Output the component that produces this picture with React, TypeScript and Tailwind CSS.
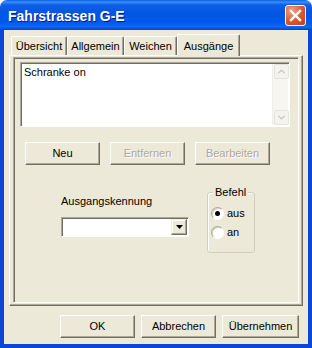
import { ChevronUp, ChevronDown } from "lucide-react";

const tabs = [
  { label: "Übersicht", w: "w-[56px]" },
  { label: "Allgemein", w: "w-[57px]" },
  { label: "Weichen", w: "w-[53px]" },
];

function Btn({ label, className, disabled }: { label: string; className: string; disabled?: boolean }) {
  return (
    <div
      className={
        "h-[23px] flex items-center justify-center bg-[#ece9d8] border-t border-l border-t-white border-l-white border-r border-b border-r-[#716f64] border-b-[#716f64] shadow-[inset_-1px_-1px_0_#aca899] text-[11px] leading-[13px] " +
        (disabled ? "text-[#aca899] [text-shadow:1px_1px_0_#ffffff]" : "text-black") +
        " " +
        className
      }
    >
      {label}
    </div>
  );
}

function Radio({ label, checked }: { label: string; checked?: boolean }) {
  return (
    <div className="flex items-center h-[13px] gap-[3px]">
      <div className="w-[13px] h-[13px] rounded-full bg-white border border-t-[#aca899] border-l-[#aca899] border-r-white border-b-white shadow-[inset_1px_1px_0_#d6d3c4] flex items-center justify-center">
        {checked && <div className="w-[5px] h-[5px] rounded-full bg-black" />}
      </div>
      <span className="text-[11px] leading-[13px]">{label}</span>
    </div>
  );
}

export default function App() {
  return (
    <div className="w-[312px] h-[348px] flex flex-col font-['Liberation_Sans',Arial,sans-serif] select-none">
      {/* title bar */}
      <div className="h-[30px] rounded-t-[7px] flex items-start justify-between pl-[8px] pr-[6px] pt-[5px] bg-[linear-gradient(to_bottom,#0a5fe6_0%,#3d8ff8_7%,#0e5fe8_16%,#0355e2_45%,#0059ea_75%,#0b69f4_90%,#0043c4_100%)]">
        <span className="text-white font-bold text-[14px] leading-[18px] mt-[2px] [text-shadow:1px_1px_0_#0a1a80]">
          Fahrstrassen G-E
        </span>
        <div className="w-[21px] h-[21px] rounded-[3px] border border-white bg-[radial-gradient(circle_at_30%_25%,#f1a083,#d9572f_55%,#c13c16)] flex items-center justify-center">
          <svg width="13" height="13" viewBox="0 0 13 13">
            <line x1="2" y1="2" x2="11" y2="11" stroke="white" strokeWidth="2.4" strokeLinecap="square" />
            <line x1="11" y1="2" x2="2" y2="11" stroke="white" strokeWidth="2.4" strokeLinecap="square" />
          </svg>
        </div>
      </div>

      {/* client area */}
      <div className="flex-1 flex flex-col bg-[#ece9d8] border-x-4 border-b-4 border-[#0a47d6] px-[5px] pt-[4px]">
        {/* tabs */}
        <div className="h-[21px] flex items-end pl-[2px] text-[11px] relative z-10">
          {tabs.map((t) => (
            <div
              key={t.label}
              className={
                "h-[19px] flex items-center justify-center border-t border-l border-t-white border-l-white border-r border-r-[#716f64] shadow-[inset_-1px_0_0_#aca899] rounded-t-[2px] " +
                t.w
              }
            >
              {t.label}
            </div>
          ))}
          <div className="w-[63px] h-[22px] -mb-[1px] bg-[#ece9d8] flex items-start justify-center pt-[3px] border-t border-l border-t-white border-l-white border-r border-r-[#716f64] shadow-[inset_-1px_0_0_#aca899] rounded-t-[2px]">
            Ausgänge
          </div>
        </div>

        {/* panel */}
        <div className="h-[251px] flex flex-col border-t border-l border-t-white border-l-white border-r border-b border-r-[#716f64] border-b-[#716f64] shadow-[inset_-1px_-1px_0_#aca899] pl-[3px] pt-[1px] pr-[3px] pb-[2px]">
          <div className="flex-1 flex flex-col border-t border-l border-t-[#aca899] border-l-[#aca899] border-r border-b border-r-white border-b-white shadow-[inset_1px_1px_0_#716f64]">
            {/* list box */}
            <div className="ml-[6px] mt-[4px] w-[270px] h-[65px] flex bg-white border-t border-l border-t-[#aca899] border-l-[#aca899] border-r border-b border-r-white border-b-white shadow-[inset_1px_1px_0_#716f64] pl-[3px] pt-[3px] pr-[1px] pb-[1px]">
              <div className="flex-1 text-[11px] leading-[13px]">Schranke on</div>
              <div className="w-[16px] flex flex-col justify-between bg-[#f7f6f1] border-l border-l-[#f0efe8] mt-[-2px]">
                <div className="w-[15px] h-[15px] ml-[1px] rounded-[2px] border border-[#e6e4da] bg-[#f4f3ee] flex items-center justify-center">
                  <ChevronUp size={11} strokeWidth={3} color="#c9c7ba" />
                </div>
                <div className="w-[15px] h-[15px] ml-[1px] rounded-[2px] border border-[#e6e4da] bg-[#f4f3ee] flex items-center justify-center">
                  <ChevronDown size={11} strokeWidth={3} color="#c9c7ba" />
                </div>
              </div>
            </div>

            {/* action buttons */}
            <div className="mt-[15px] ml-[11px] flex gap-[10px]">
              <Btn label="Neu" className="w-[75px]" />
              <Btn label="Entfernen" className="w-[75px]" disabled />
              <Btn label="Bearbeiten" className="w-[75px]" disabled />
            </div>

            {/* lower row */}
            <div className="mt-[27px] flex items-start">
              <div className="ml-[47px] w-[128px] flex flex-col pt-[3px]">
                <span className="text-[11px] leading-[13px]">Ausgangskennung</span>
                <div className="mt-[9px] h-[20px] flex justify-end bg-white border-t border-l border-t-[#aca899] border-l-[#aca899] border-r border-b border-r-white border-b-white shadow-[inset_1px_1px_0_#716f64] pt-[1px] pr-[1px] pl-[1px] pb-[1px]">
                  <div className="w-[16px] h-[16px] bg-[#ece9d8] border-t border-l border-t-[#f1efe2] border-l-[#f1efe2] border-r border-b border-r-[#716f64] border-b-[#716f64] shadow-[inset_-1px_-1px_0_#aca899,inset_1px_1px_0_#ffffff] flex items-center justify-center">
                    <svg width="7" height="4" viewBox="0 0 7 4">
                      <polygon points="0,0 7,0 3.5,4" fill="black" />
                    </svg>
                  </div>
                </div>
              </div>

              <div className="relative ml-[18px] w-[48px] h-[61px] border border-[#d0d0bf] rounded-[3px] shadow-[inset_1px_1px_0_#ffffff] pl-[3px] pt-[14px] flex flex-col gap-[6px]">
                <span className="absolute -top-[7px] left-[5px] px-[2px] bg-[#ece9d8] text-[11px] leading-[13px]">
                  Befehl
                </span>
                <Radio label="aus" checked />
                <Radio label="an" />
              </div>
            </div>
          </div>
        </div>

        {/* dialog buttons */}
        <div className="mt-[9px] flex justify-end gap-[6px] pr-[4px]">
          <Btn label="OK" className="w-[75px]" />
          <Btn label="Abbrechen" className="w-[75px]" />
          <Btn label="Übernehmen" className="w-[77px]" />
        </div>
      </div>
    </div>
  );
}
